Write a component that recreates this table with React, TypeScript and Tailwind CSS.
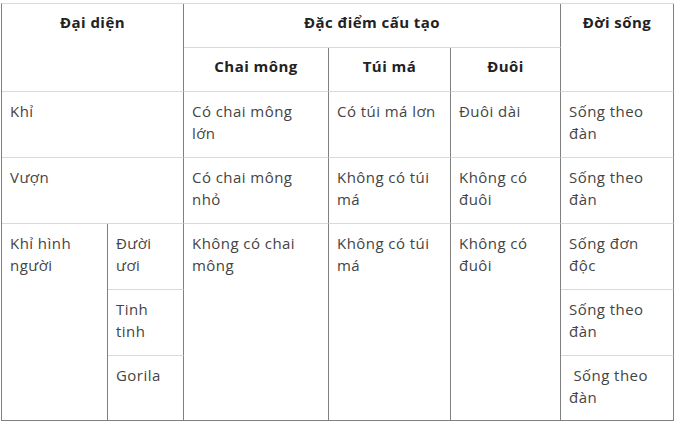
import React from "react";

const V = "border-r border-r-[#808080] border-b border-b-[#d9d9d9]";
const VB = "border-r border-r-[#808080] border-b border-b-[#808080]";
const H = `${V} align-top text-center font-bold text-[#222] px-2 pt-[7px]`;
const B = `${V} align-top text-left text-[#444] px-2 pt-[8px] whitespace-nowrap`;
const BB = `${VB} align-top text-left text-[#444] px-2 pt-[8px] whitespace-nowrap`;

export default function App() {
  return (
    <div className="w-[677px] h-[425px] bg-white pl-[1px] pt-[3px]" style={{ fontFamily: '"Open Sans", "Noto Sans", sans-serif' }}>
      <table className="border-separate border-spacing-0 table-fixed w-[673px] border-l border-l-[#808080] border-t border-t-[#d9d9d9] text-[15px] leading-[22px] tracking-[0.45px]">
        <colgroup>
          <col className="w-[106px]" />
          <col className="w-[76px]" />
          <col className="w-[145px]" />
          <col className="w-[122px]" />
          <col className="w-[110px]" />
          <col className="w-[113px]" />
        </colgroup>
        <tbody>
          <tr className="h-[44px]">
            <td colSpan={2} rowSpan={2} className={H}>Đại diện</td>
            <td colSpan={3} className={H}>Đặc điểm cấu tạo</td>
            <td rowSpan={2} className={H}>Đời sống</td>
          </tr>
          <tr className="h-[44px]">
            <td className={H}>Chai mông</td>
            <td className={H}>Túi má</td>
            <td className={H}>Đuôi</td>
          </tr>
          <tr className="h-[66px]">
            <td colSpan={2} className={B}>Khỉ</td>
            <td className={B}>Có chai mông<br />lớn</td>
            <td className={B}>Có túi má lơn</td>
            <td className={B}>Đuôi dài</td>
            <td className={B}>Sống theo<br />đàn</td>
          </tr>
          <tr className="h-[66px]">
            <td colSpan={2} className={B}>Vượn</td>
            <td className={B}>Có chai mông<br />nhỏ</td>
            <td className={B}>Không có túi<br />má</td>
            <td className={B}>Không có<br />đuôi</td>
            <td className={B}>Sống theo<br />đàn</td>
          </tr>
          <tr className="h-[66px]">
            <td rowSpan={3} className={BB}>Khỉ hình<br />người</td>
            <td className={B}>Đười<br />ươi</td>
            <td rowSpan={3} className={BB}>Không có chai<br />mông</td>
            <td rowSpan={3} className={BB}>Không có túi<br />má</td>
            <td rowSpan={3} className={BB}>Không có<br />đuôi</td>
            <td className={B}>Sống đơn<br />độc</td>
          </tr>
          <tr className="h-[66px]">
            <td className={B}>Tinh<br />tinh</td>
            <td className={B}>Sống theo<br />đàn</td>
          </tr>
          <tr className="h-[65px]">
            <td className={BB}>Gorila</td>
            <td className={BB}>&nbsp;Sống theo<br />đàn</td>
          </tr>
        </tbody>
      </table>
    </div>
  );
}
